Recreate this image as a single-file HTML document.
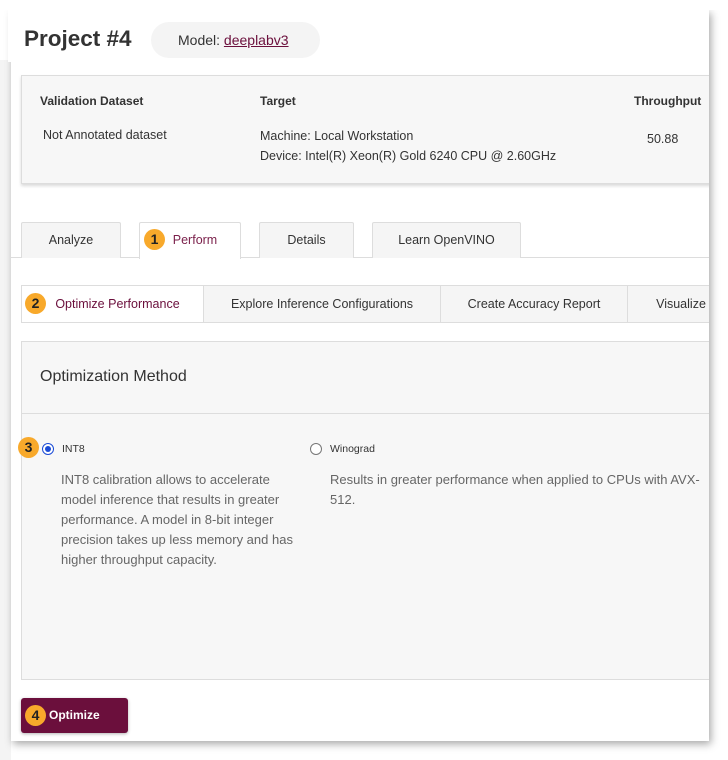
<!DOCTYPE html><html><head><style>
*{box-sizing:border-box;margin:0;padding:0}
body{width:728px;height:760px;background:#fff;font-family:"Liberation Sans",Arial,sans-serif;position:relative;overflow:hidden;color:#333}
.a{position:absolute}
.page{left:11px;top:10px;width:698px;height:731px;background:#fff;box-shadow:2px 3px 8px rgba(0,0,0,.35)}
.badge{position:absolute;width:21px;height:21px;border-radius:50%;background:#f8a92b;color:#222;font-weight:bold;font-size:14px;text-align:center;line-height:21px}
.tab{position:absolute;top:222px;height:36px;background:#f5f5f5;border:1px solid #ddd;border-bottom:none;font-size:12.5px;color:#333;text-align:center;line-height:35px;border-radius:2px 2px 0 0}
.st{position:absolute;top:0;height:37px;font-size:12.5px;line-height:36px;text-align:center;color:#333;border-right:1px solid #ddd}
.p{font-size:13px;color:#666;line-height:20px}
.clip{position:absolute;left:0;top:0;width:709px;height:760px;overflow:hidden}
</style></head><body>
<div class="a" style="left:0;top:60px;width:11px;height:700px;background:#f4f4f4"></div>
<div class="a page"></div>
<div class="a" style="left:0;top:0;width:728px;height:10px;background:#fff"></div>
<div class="a" style="left:8px;top:8px;width:550px;height:54px;background:#fff"></div>
<div class="a" style="left:24px;top:26px;font-size:22.5px;font-weight:bold;color:#333">Project #4</div>
<div class="a" style="left:151px;top:22px;width:169px;height:36px;border-radius:18px;background:#f4f4f4;font-size:14px;line-height:36px;padding-left:27px;color:#333">Model: <span style="color:#6b0f3c;text-decoration:underline">deeplabv3</span></div>
<div class="clip">
<div class="a" style="left:21px;top:75px;width:700px;height:109px;background:#f7f7f7;border:1px solid #ddd;box-shadow:0 2px 3px rgba(0,0,0,.15)"></div>
<div class="a" style="left:40px;top:94px;font-size:12px;font-weight:bold">Validation Dataset</div>
<div class="a" style="left:260px;top:94px;font-size:12px;font-weight:bold">Target</div>
<div class="a" style="left:634px;top:94px;font-size:12px;font-weight:bold">Throughput</div>
<div class="a" style="left:43px;top:128px;font-size:12.5px">Not Annotated dataset</div>
<div class="a" style="left:260px;top:126px;font-size:12.5px;line-height:20px">Machine: Local Workstation<br>Device: Intel(R) Xeon(R) Gold 6240 CPU @ 2.60GHz</div>
<div class="a" style="left:647px;top:132px;font-size:12.5px">50.88</div>

<div class="a" style="left:11px;top:257px;width:698px;height:1px;background:#ddd"></div>
<div class="tab" style="left:21px;width:100px">Analyze</div>
<div class="tab" style="left:139px;width:102px;background:#fff;height:37px;color:#7a1f4a;padding-left:10px">Perform</div>
<div class="badge" style="left:144px;top:229px">1</div>
<div class="tab" style="left:259px;width:95px">Details</div>
<div class="tab" style="left:372px;width:149px">Learn OpenVINO</div>

<div class="a" style="left:21px;top:285px;width:700px;height:38px;border:1px solid #ddd;background:#f5f5f5;overflow:hidden">
<div class="st" style="left:0;width:182px;background:#fff;color:#6b0f3c;padding-left:10px">Optimize Performance</div>
<div class="st" style="left:182px;width:237px">Explore Inference Configurations</div>
<div class="st" style="left:419px;width:187px">Create Accuracy Report</div>
<div class="st" style="left:606px;width:106px;border:none">Visualize</div>
</div>
<div class="badge" style="left:25px;top:293px">2</div>

<div class="a" style="left:21px;top:341px;width:700px;height:339px;background:#f7f7f7;border:1px solid #ddd"></div>
<div class="a" style="left:21px;top:413px;width:700px;height:1px;background:#ddd"></div>
</div>
<div class="a" style="left:40px;top:368px;font-size:16px;color:#333">Optimization Method</div>
<div class="a" style="left:42px;top:443px;width:12px;height:12px;border:1px solid #1a4bd6;border-radius:50%;background:#fff"><div style="margin:2px;width:6px;height:6px;border-radius:50%;background:#1a4bd6"></div></div>
<div class="badge" style="left:18px;top:437px">3</div>
<div class="a" style="left:62px;top:443px;font-size:10.5px;color:#333">INT8</div>
<div class="a p" style="left:61px;top:470px;width:240px">INT8 calibration allows to accelerate model inference that results in greater performance. A model in 8-bit integer precision takes up less memory and has higher throughput capacity.</div>
<div class="a" style="left:310px;top:443px;width:12px;height:12px;border:1px solid #777;border-radius:50%;background:#fff"></div>
<div class="a" style="left:330px;top:443px;font-size:10.5px;color:#333">Winograd</div>
<div class="a p" style="left:330px;top:470px;width:370px">Results in greater performance when applied to CPUs with AVX-512.</div>

<div class="a" style="left:21px;top:698px;width:107px;height:35px;background:#6b0f3c;border-radius:3px;box-shadow:0 1px 3px rgba(0,0,0,.3);color:#fff;font-size:12px;font-weight:bold;line-height:35px;padding-left:28px">Optimize</div>
<div class="badge" style="left:25px;top:705px">4</div>
</body></html>
